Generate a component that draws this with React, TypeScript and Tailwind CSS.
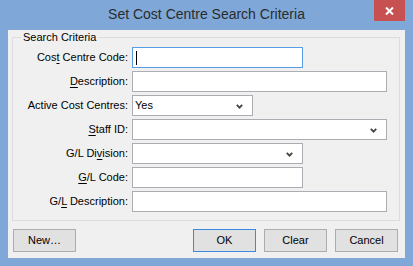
import React from "react";

type Field = {
  label: React.ReactNode;
  width: string;
  kind: "text" | "select";
  value?: string;
  focused?: boolean;
};

const U = ({ c }: { c: string }) => <span className="underline underline-offset-[2px]">{c}</span>;

const fields: Field[] = [
  { label: <>Cos<U c="t" /> Centre Code:</>, width: "w-[171px]", kind: "text", focused: true },
  { label: <><U c="D" />escription:</>, width: "w-[255px]", kind: "text" },
  { label: <>Active Cost Centres:</>, width: "w-[121px]", kind: "select", value: "Yes" },
  { label: <><U c="S" />taff ID:</>, width: "w-[255px]", kind: "select" },
  { label: <>G/L Di<U c="v" />ision:</>, width: "w-[171px]", kind: "select" },
  { label: <><U c="G" />/L Code:</>, width: "w-[171px]", kind: "text" },
  { label: <>G/<U c="L" /> Description:</>, width: "w-[255px]", kind: "text" },
];

function Chevron() {
  return (
    <svg width="7" height="5" viewBox="0 0 7 5" className="absolute right-[9px] top-[8px]">
      <path d="M0.8 0.8 L3.5 3.6 L6.2 0.8" fill="none" stroke="#444" strokeWidth="1.8" />
    </svg>
  );
}

function Button({ children, primary }: { children: React.ReactNode; primary?: boolean }) {
  return (
    <div
      className={`w-[63px] h-[23px] flex items-center justify-center bg-[#e1e1e1] border text-[11px] text-black ${
        primary ? "border-[#3c8ae0]" : "border-[#adadad]"
      }`}
    >
      {children}
    </div>
  );
}

export default function App() {
  return (
    <div
      className="w-[413px] h-[266px] bg-[#7fa8d9] flex flex-col"
      style={{ fontFamily: '"Liberation Sans", Arial, sans-serif' }}
    >
      <div className="relative h-[30px] flex items-center justify-center">
        <span className="text-[14px] text-[#2b2b2b] mt-[-1px]">Set Cost Centre Search Criteria</span>
        <div className="absolute right-[8px] top-0 w-[31px] h-[21px] bg-[#c75050] flex items-center justify-center">
          <svg width="9" height="8" viewBox="0 0 9 8">
            <path d="M1 0.5 L8 7.5 M8 0.5 L1 7.5" stroke="#fff" strokeWidth="2" />
          </svg>
        </div>
      </div>
      <div className="mx-[8px] h-[228px] bg-[#f0f0f0] flex flex-col pt-[7px] pl-[4px]">
        <div className="relative w-[388px] h-[184px] border border-[#dcdcdc] pt-[9px]">
          <span className="absolute left-[8px] top-[-8px] px-[2px] bg-[#f0f0f0] text-[11px] text-black leading-[14px]">
            Search Criteria
          </span>
          <div className="flex flex-col gap-[3px]">
            {fields.map((f, i) => (
              <div key={i} className="flex items-center">
                <div className="w-[116px] text-right text-[11px] text-black pr-[1px]">{f.label}</div>
                <div
                  className={`relative ml-[3px] h-[21px] bg-white border ${f.width} ${
                    f.focused ? "border-[#569de5]" : "border-[#abadb3]"
                  } flex items-center pl-[2px] text-[11px] text-black`}
                >
                  {f.focused && <div className="w-[1px] h-[14px] bg-black ml-[1px]" />}
                  {f.value}
                  {f.kind === "select" && <Chevron />}
                </div>
              </div>
            ))}
          </div>
        </div>
        <div className="flex mt-[8px] pl-[1px]">
          <Button>New…</Button>
          <div className="ml-[117px] flex gap-[8px]">
            <Button primary>OK</Button>
            <Button>Clear</Button>
            <Button>Cancel</Button>
          </div>
        </div>
      </div>
    </div>
  );
}
